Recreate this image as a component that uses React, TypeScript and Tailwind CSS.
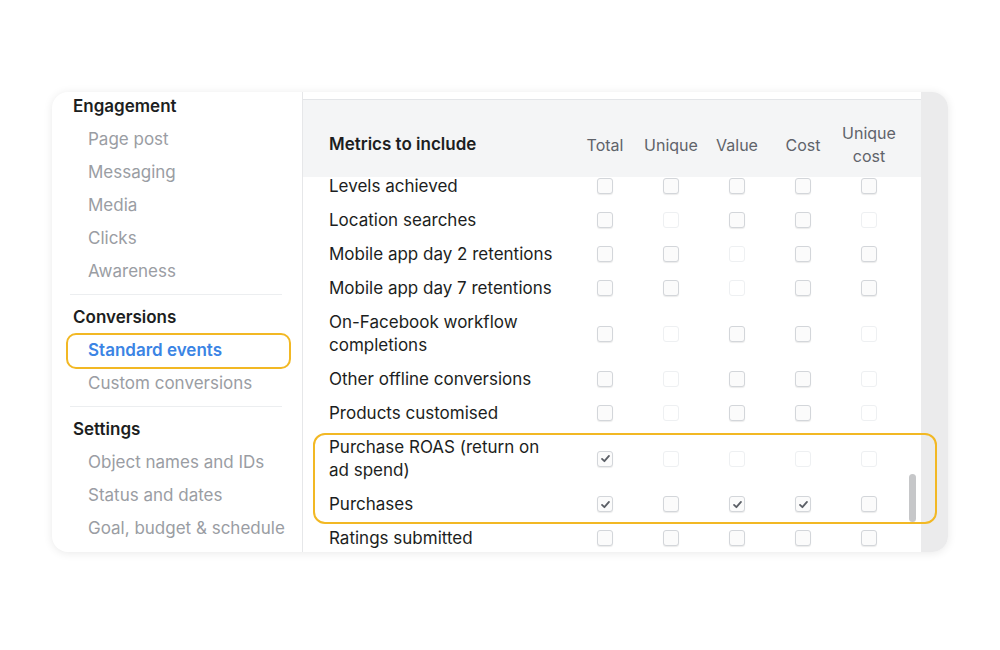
import React from 'react';

type Box = 'n' | 'd' | 'c';

const ROWS: { label: string[]; boxes: Box[] }[] = [
  { label: ['Levels achieved'], boxes: ['n', 'n', 'n', 'n', 'n'] },
  { label: ['Location searches'], boxes: ['n', 'd', 'n', 'n', 'd'] },
  { label: ['Mobile app day 2 retentions'], boxes: ['n', 'n', 'd', 'n', 'n'] },
  { label: ['Mobile app day 7 retentions'], boxes: ['n', 'n', 'd', 'n', 'n'] },
  { label: ['On-Facebook workflow', 'completions'], boxes: ['n', 'd', 'n', 'n', 'd'] },
  { label: ['Other offline conversions'], boxes: ['n', 'd', 'n', 'n', 'd'] },
  { label: ['Products customised'], boxes: ['n', 'd', 'n', 'n', 'd'] },
  { label: ['Purchase ROAS (return on', 'ad spend)'], boxes: ['c', 'd', 'd', 'd', 'd'] },
  { label: ['Purchases'], boxes: ['c', 'n', 'c', 'c', 'n'] },
  { label: ['Ratings submitted'], boxes: ['n', 'n', 'n', 'n', 'n'] },
];

const SECTIONS = [
  { title: 'Engagement', items: ['Page post', 'Messaging', 'Media', 'Clicks', 'Awareness'] },
  { title: 'Conversions', items: ['Standard events', 'Custom conversions'] },
  { title: 'Settings', items: ['Object names and IDs', 'Status and dates', 'Goal, budget & schedule'] },
];

function Check({ state }: { state: Box }) {
  if (state === 'd') {
    return <div className="w-[16px] h-[16px] rounded-[3px] border border-[#eef0f2] bg-white" />;
  }
  return (
    <div className="w-[16px] h-[16px] rounded-[3px] border border-[#d3d6da] bg-[#fbfbfb] shadow-[0_1px_1px_rgba(0,0,0,0.08)] flex items-center justify-center">
      {state === 'c' && (
        <svg width="11" height="11" viewBox="0 0 12 12">
          <path d="M2.2 6.4 L4.8 8.9 L9.8 3.2" fill="none" stroke="#5b5f66" strokeWidth="2" strokeLinecap="round" strokeLinejoin="round" />
        </svg>
      )}
    </div>
  );
}

export default function App() {
  return (
    <div className="w-full h-[650px] bg-white pt-[92px] pl-[52px]" style={{ fontFamily: 'Inter, "Liberation Sans", Arial, sans-serif' }}>
      <div className="relative w-[896px] h-[460px] flex rounded-[16px] overflow-hidden bg-white shadow-[0_1px_10px_rgba(0,0,0,0.09)]">
        {/* Sidebar */}
        <div className="w-[251px] shrink-0 border-r border-[#e6e7e9] overflow-hidden">
          <div className="-mt-[2px] pl-[21px] text-[17px] whitespace-nowrap">
            {SECTIONS.map((s, si) => (
              <div key={s.title}>
                {si > 0 && <div className="h-px bg-[#eceef0] my-[6px] -ml-[3px] mr-[20px]" />}
                <div className="h-[33px] flex items-center font-semibold text-[#1c1e21]">{s.title}</div>
                {s.items.map((it) => (
                  <div
                    key={it}
                    className={`h-[33px] flex items-center pl-[15px] ${it === 'Standard events' ? 'font-semibold text-[#3b84e4]' : 'text-[#9a9da3]'}`}
                  >
                    {it}
                  </div>
                ))}
              </div>
            ))}
          </div>
        </div>

        {/* Main panel */}
        <div className="relative flex-1 flex flex-col overflow-hidden">
          <div className="h-[8px] shrink-0 bg-white border-b border-[#e3e5e8]" />
          <div className="h-[77px] shrink-0 bg-[#f4f5f6] pt-[12px] grid grid-cols-[269px_repeat(5,66px)] items-center">
            <div className="pl-[26px] font-semibold text-[17px] text-[#1c1e21]">Metrics to include</div>
            {['Total', 'Unique', 'Value', 'Cost'].map((h) => (
              <div key={h} className="text-center text-[16px] text-[#5f636a]">{h}</div>
            ))}
            <div className="text-center text-[16px] leading-[23px] text-[#5f636a]">Unique<br />cost</div>
          </div>
          <div className="flex-1 overflow-hidden">
            <div className="-mt-[8px]">
              {ROWS.map((r) => (
                <div
                  key={r.label[0]}
                  className={`grid grid-cols-[269px_repeat(5,66px)] items-center ${r.label.length > 1 ? 'h-[57px]' : 'h-[34px]'}`}
                >
                  <div className="pl-[26px] text-[17px] leading-[23px] text-[#1c1e21] whitespace-nowrap">
                    {r.label.map((l) => (
                      <div key={l}>{l}</div>
                    ))}
                  </div>
                  {r.boxes.map((b, i) => (
                    <div key={i} className="flex justify-center">
                      <Check state={b} />
                    </div>
                  ))}
                </div>
              ))}
            </div>
          </div>
          {/* scroll thumb */}
          <div className="absolute left-[606px] top-[382px] w-[7px] h-[48px] rounded-full bg-[#c6c7c9]" />
        </div>

        {/* scrollbar track */}
        <div className="w-[27px] shrink-0 bg-[#ebebec]" />

        {/* highlight outlines */}
        <div className="absolute left-[14px] top-[241px] w-[225px] h-[36px] rounded-[10px] border-2 border-[#f2b824] pointer-events-none" />
        <div className="absolute left-[261px] top-[341px] w-[624px] h-[91px] rounded-[12px] border-2 border-[#f2b824] pointer-events-none" />
      </div>
    </div>
  );
}
